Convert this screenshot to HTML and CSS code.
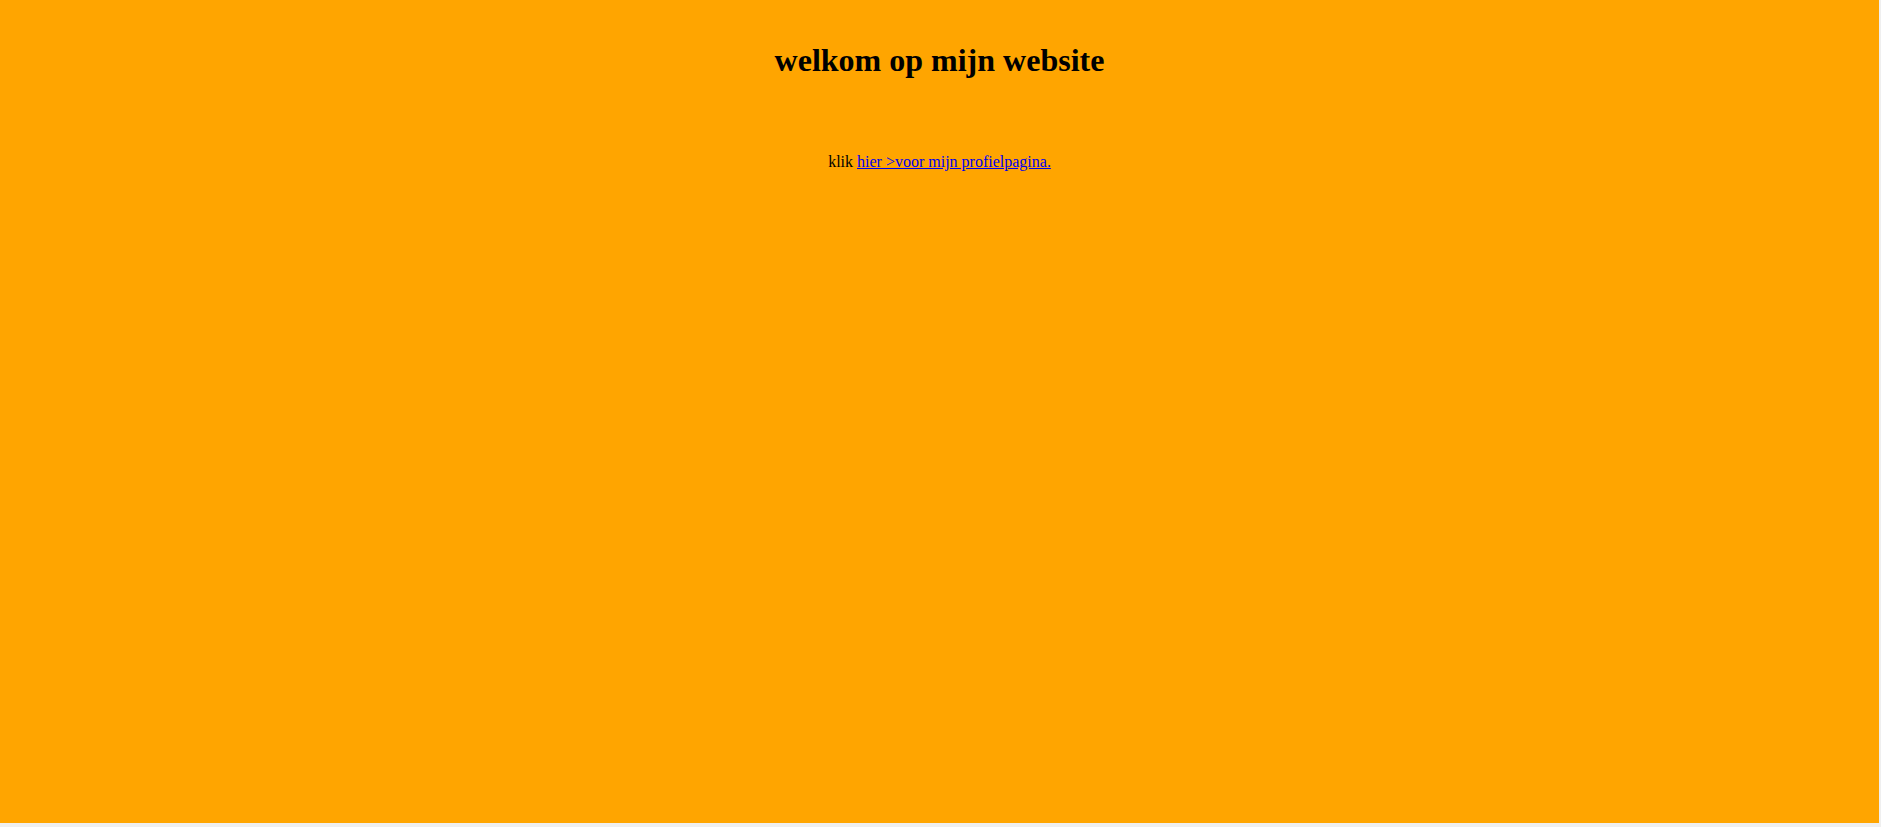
FILE: index.html
```html
<!DOCTYPE html>
<html>
<head>
<meta charset="utf-8">
<link rel="stylesheet" href="styles.css">
</head>
<body>
<div class="page">
  <h1 class="title">welkom op mijn website</h1>
  <p class="intro">klik <a href="#">hier &gt;voor mijn profielpagina.</a></p>
</div>
</body>
</html>
```
FILE: styles.css
```css
html, body {
  margin: 0;
  padding: 0;
  background: #efefef;
}
.page {
  width: 1879px;
  height: 823px;
  background: #ffa500;
  font-family: "Liberation Serif", "Times New Roman", serif;
  color: #000;
  text-align: center;
  padding-top: 42px;
  box-sizing: border-box;
}
.title {
  font-size: 32px;
  font-weight: bold;
  margin: 0;
  line-height: 37px;
}
.intro {
  font-size: 16px;
  margin: 74px 0 0;
}
.intro a {
  color: #0000ee;
}
```
